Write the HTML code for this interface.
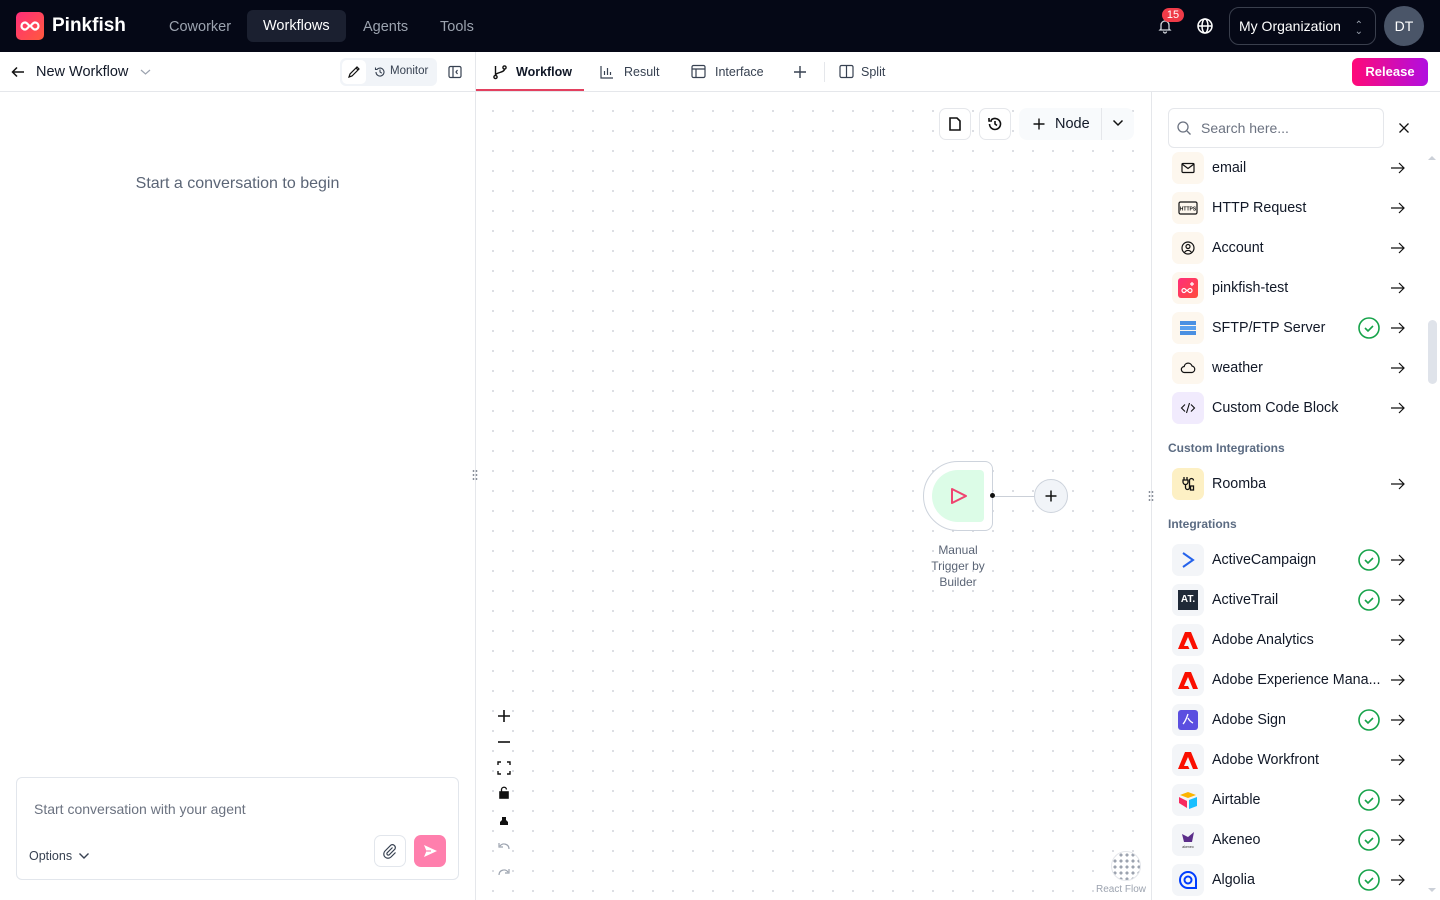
<!DOCTYPE html>
<html><head><meta charset="utf-8">
<style>
*{box-sizing:border-box;margin:0;padding:0}
body{width:1440px;height:900px;overflow:hidden;font-family:"Liberation Sans",sans-serif;background:#fff;color:#111827;position:relative}
.top{position:absolute;left:0;top:0;width:1440px;height:52px;background:#050816}
.abs{position:absolute}
.nav{position:absolute;top:10px;height:32px;line-height:32px;font-size:14.5px;color:#9ca3af;padding:0 16px;border-radius:6px}
.row{position:absolute;left:1168px;width:240px;height:40px;display:flex;align-items:center}
.ic{width:32px;height:32px;border-radius:7px;background:#fdf7ee;display:flex;align-items:center;justify-content:center;margin-left:4px}
.ic.g{background:#f3f5f8}
.row .t{margin-left:8px;font-size:14.3px;color:#111827;flex:1;white-space:nowrap}
.hdr{position:absolute;left:1168px;font-size:12px;color:#5b6b82;font-weight:bold}
</style></head><body>
<div class="top">
  <div class="abs" style="left:16px;top:12px;width:28px;height:28px;border-radius:5px;background:linear-gradient(135deg,#ff2d7a,#ff5a3c)">
    <svg width="28" height="28" viewBox="0 0 28 28"><path d="M9 10.5a3.5 3.5 0 1 0 0 7c2.5 0 3.5-3.5 5-3.5s2.5 3.5 5 3.5a3.5 3.5 0 1 0 0-7c-2.5 0-3.5 3.5-5 3.5s-2.5-3.5-5-3.5z" fill="none" stroke="#fff" stroke-width="2.2"/></svg>
  </div>
  <div class="abs" style="left:52px;top:15px;font-size:19px;font-weight:bold;color:#fff">Pinkfish</div>
  <div class="nav" style="left:153px;top:11px">Coworker</div>
  <div class="nav" style="left:247px;background:#1b2030;color:#fff;top:10px;line-height:33px">Workflows</div>
  <div class="nav" style="left:347px;top:11px">Agents</div>
  <div class="nav" style="left:424px;top:11px">Tools</div>
  <svg class="abs" style="left:1157px;top:18px" width="16" height="16" viewBox="0 0 16 16"><path d="M4 11V7a4 4 0 0 1 8 0v4l1 1H3zM6.5 13.5a1.5 1.5 0 0 0 3 0" fill="none" stroke="#d1d5db" stroke-width="1.3"/></svg>
  <div class="abs" style="left:1162px;top:8px;width:22px;height:14px;border-radius:7px;background:#ef3b48;color:#fff;font-size:11px;line-height:14px;text-align:center">15</div>
  <svg class="abs" style="left:1196px;top:17px" width="18" height="18" viewBox="0 0 18 18" fill="none" stroke="#fff" stroke-width="1.5"><circle cx="9" cy="9" r="7"/><ellipse cx="9" cy="9" rx="3" ry="7"/><path d="M2 9h14"/></svg>
  <div class="abs" style="left:1229px;top:7px;width:147px;height:38px;border:1px solid #3a3f4d;border-radius:10px;color:#fff;font-size:14px;line-height:36px;padding-left:9px">My Organization<span style="position:absolute;right:12px;top:0;color:#9ca3af;font-size:10px">⌃</span><span style="position:absolute;right:12px;top:6px;color:#9ca3af;font-size:10px">⌄</span></div>
  <div class="abs" style="left:1384px;top:6px;width:40px;height:40px;border-radius:50%;background:#4a5568;color:#fff;font-size:14px;line-height:40px;text-align:center">DT</div>
</div>
<div class="abs" style="left:0;top:52px;width:1440px;height:40px;border-bottom:1px solid #e5e7eb"></div>
<svg class="abs" style="left:10px;top:64px" width="16" height="16" viewBox="0 0 16 16" fill="none" stroke="#111" stroke-width="1.5"><path d="M14 8H3M7 3.5L2.5 8 7 12.5"/></svg>
<div class="abs" style="left:36px;top:64px;font-size:14.5px">New Workflow</div>
<svg class="abs" style="left:140px;top:68px" width="11" height="8" viewBox="0 0 11 8" fill="none" stroke="#9ca3af" stroke-width="1.2"><path d="M1 2l4.5 4L10 2"/></svg>
<div class="abs" style="left:340px;top:58px;width:97px;height:28px;border-radius:6px;background:#f1f4f8"></div>
<div class="abs" style="left:342px;top:60px;width:24px;height:24px;border-radius:5px;background:#fff"></div>
<svg class="abs" style="left:347px;top:65px" width="14" height="14" viewBox="0 0 14 14" fill="none" stroke="#111" stroke-width="1.2"><path d="M2 12l1-3 7-7 2 2-7 7zM9 3l2 2"/></svg>
<svg class="abs" style="left:374px;top:66px" width="12" height="12" viewBox="0 0 12 12" fill="none" stroke="#374151" stroke-width="1.1"><path d="M2 6a4 4 0 1 0 1.2-2.8M1.5 1.5v2h2M6 3.5V6l1.8 1.2"/></svg>
<div class="abs" style="left:390px;top:65px;font-size:11.5px;color:#374151">Monitor</div>
<svg class="abs" style="left:448px;top:65px" width="14" height="14" viewBox="0 0 14 14" fill="none" stroke="#374151" stroke-width="1.2"><rect x="1" y="1.5" width="12" height="11" rx="1.5"/><path d="M5 1.5v11M9.5 5L8 7l1.5 2"/></svg>
<div class="abs" style="left:475px;top:52px;width:1px;height:848px;background:#e5e7eb"></div>
<svg class="abs" style="left:492px;top:64px" width="16" height="16" viewBox="0 0 16 16" fill="none" stroke="#111" stroke-width="1.4"><circle cx="3.5" cy="13" r="1.6"/><circle cx="12.5" cy="3.5" r="1.6"/><path d="M3.5 2v9.4M12.5 5c0 4-9 3-9 6.5"/></svg>
<div class="abs" style="left:516px;top:65px;font-size:12.5px;font-weight:bold">Workflow</div>
<div class="abs" style="left:476px;top:89px;width:108px;height:2px;background:#e3405f"></div>
<svg class="abs" style="left:600px;top:65px" width="14" height="14" viewBox="0 0 14 14" fill="none" stroke="#374151" stroke-width="1.2"><path d="M1 1v12h12M4.5 10V6M7.5 10V3M10.5 10V7"/></svg>
<div class="abs" style="left:624px;top:65px;font-size:12.5px;color:#374151">Result</div>
<svg class="abs" style="left:691px;top:64px" width="15" height="15" viewBox="0 0 15 15" fill="none" stroke="#374151" stroke-width="1.2"><rect x="1" y="1.5" width="13" height="12" rx="1.5"/><path d="M1 5h13M5 5v8.5"/></svg>
<div class="abs" style="left:715px;top:65px;font-size:12.5px;color:#374151">Interface</div>
<svg class="abs" style="left:793px;top:65px" width="14" height="14" viewBox="0 0 14 14" stroke="#374151" stroke-width="1.4"><path d="M7 1v12M1 7h12"/></svg>
<div class="abs" style="left:824px;top:62px;width:1px;height:20px;background:#e5e7eb"></div>
<svg class="abs" style="left:839px;top:64px" width="15" height="15" viewBox="0 0 15 15" fill="none" stroke="#374151" stroke-width="1.2"><rect x="1" y="1.5" width="13" height="12" rx="1.5"/><path d="M7.5 1.5v12"/></svg>
<div class="abs" style="left:861px;top:65px;font-size:12.5px;color:#374151">Split</div>
<div class="abs" style="left:1352px;top:58px;width:76px;height:28px;border-radius:6px;background:linear-gradient(90deg,#ff0a78,#b10ee0);color:#fff;font-size:13px;font-weight:bold;line-height:28px;text-align:center">Release</div>
<div class="abs" style="left:0;top:175px;width:475px;text-align:center;font-size:16px;color:#5b6576">Start a conversation to begin</div>
<div class="abs" style="left:16px;top:777px;width:443px;height:103px;border:1px solid #e2e6ec;border-radius:6px;background:#fff"></div>
<div class="abs" style="left:34px;top:801px;font-size:14px;color:#6b7280">Start conversation with your agent</div>
<div class="abs" style="left:29px;top:849px;font-size:12.5px;color:#374151">Options</div>
<svg class="abs" style="left:78px;top:852px" width="12" height="8" viewBox="0 0 12 8" fill="none" stroke="#374151" stroke-width="1.4"><path d="M1.5 1.5L6 6l4.5-4.5"/></svg>
<div class="abs" style="left:374px;top:835px;width:32px;height:32px;border:1px solid #e2e6ec;border-radius:7px"></div>
<svg class="abs" style="left:382px;top:843px" width="16" height="16" viewBox="0 0 16 16" fill="none" stroke="#374151" stroke-width="1.2"><path d="M10.5 4.5L5 10a1.5 1.5 0 0 0 2 2l6-6a3 3 0 0 0-4-4L3 8a4.2 4.2 0 0 0 6 6l4.5-4.5"/></svg>
<div class="abs" style="left:414px;top:835px;width:32px;height:32px;border-radius:7px;background:#ff7fad"></div>
<svg class="abs" style="left:422px;top:843px" width="16" height="16" viewBox="0 0 16 16"><path d="M2 2l13 6-13 6 2.5-6z" fill="#fff"/><path d="M4.5 8H9" stroke="#ff7fad" stroke-width="1.2"/></svg>
<svg class="abs" style="left:472px;top:469px" width="6" height="14"><circle cx="1.5" cy="2" r="0.9" fill="#6b7280"/><circle cx="4.5" cy="2" r="0.9" fill="#6b7280"/><circle cx="1.5" cy="6" r="0.9" fill="#6b7280"/><circle cx="4.5" cy="6" r="0.9" fill="#6b7280"/><circle cx="1.5" cy="10" r="0.9" fill="#6b7280"/><circle cx="4.5" cy="10" r="0.9" fill="#6b7280"/></svg>
<div class="abs" style="left:476px;top:92px;width:675px;height:808px;background-image:radial-gradient(circle,#c4c8d0 0.7px,transparent 1px);background-size:20px 20px;background-position:-13px -11px"></div>
<div class="abs" style="left:939px;top:108px;width:32px;height:32px;border:1px solid #e5e7eb;border-radius:7px;background:#fff"></div>
<svg class="abs" style="left:947px;top:116px" width="16" height="16" viewBox="0 0 16 16" fill="none" stroke="#111" stroke-width="1.6"><path d="M3 2h7l3 3v9H3z"/></svg>
<div class="abs" style="left:979px;top:108px;width:32px;height:32px;border:1px solid #e5e7eb;border-radius:7px;background:#fff"></div>
<svg class="abs" style="left:987px;top:116px" width="16" height="16" viewBox="0 0 16 16" fill="none" stroke="#111" stroke-width="1.6"><path d="M2.5 8a5.5 5.5 0 1 0 1.6-3.9M2 2v3h3M8 5v3l2 1.5"/></svg>
<div class="abs" style="left:1019px;top:108px;width:115px;height:32px;border-radius:8px;background:#f8fafc"></div>
<svg class="abs" style="left:1032px;top:117px" width="14" height="14" viewBox="0 0 14 14" stroke="#111" stroke-width="1.4"><path d="M7 1.5v11M1.5 7h11"/></svg>
<div class="abs" style="left:1055px;top:116px;font-size:14.5px">Node</div>
<div class="abs" style="left:1101px;top:108px;width:1px;height:32px;background:#e5e7eb"></div>
<svg class="abs" style="left:1112px;top:119px" width="12" height="8" viewBox="0 0 12 8" fill="none" stroke="#111" stroke-width="1.5"><path d="M1.5 1.5L6 6l4.5-4.5"/></svg>
<div class="abs" style="left:923px;top:461px;width:70px;height:70px;border:1px solid #cdd3dc;border-radius:35px 8px 8px 35px;background:#fff"></div>
<div class="abs" style="left:932px;top:470px;width:52px;height:52px;border-radius:26px 4px 4px 26px;background:#dcfce7"></div>
<svg class="abs" style="left:949px;top:486px" width="20" height="20" viewBox="0 0 20 20" fill="none" stroke="#ef4470" stroke-width="2" stroke-linejoin="round"><path d="M3 3l14 7-14 7z"/></svg>
<div class="abs" style="left:990px;top:493px;width:5px;height:5px;border-radius:50%;background:#111"></div>
<div class="abs" style="left:995px;top:495.5px;width:40px;height:1px;background:#cbd0d8"></div>
<div class="abs" style="left:1034px;top:479px;width:34px;height:34px;border-radius:50%;border:1px solid #cdd3dc;background:#f1f4f8"></div>
<svg class="abs" style="left:1044px;top:489px" width="14" height="14" viewBox="0 0 14 14" stroke="#111" stroke-width="1.5"><path d="M7 1.5v11M1.5 7h11"/></svg>
<div class="abs" style="left:918px;top:542px;width:80px;text-align:center;font-size:12px;line-height:16px;color:#5b6576">Manual Trigger by Builder</div>
<svg class="abs" style="left:496px;top:708px" width="16" height="180" viewBox="0 0 16 180" fill="none" stroke="#111" stroke-width="1.6">
<path d="M8 2v12M2 8h12"/><path d="M2 34h12"/><path d="M2 57v-3h3M11 54h3v3M14 63v3h-3M5 66H2v-3" stroke-width="1.4"/>
<rect x="4" y="84" width="8" height="6" fill="#111"/><path d="M5.5 84v-2a2.5 2.5 0 0 1 5 -0.5" stroke-width="1.3"/>
<path d="M4 117v-3l2-2v-3h4v3l2 2v3z" fill="#111" stroke="none"/>
<path d="M4 138a5 5 0 0 1 9 3M3 135v4h4" stroke="#9ca3af" stroke-width="1.2"/>
<path d="M12 164a5 5 0 0 0-9 3M13 161v4H9" stroke="#9ca3af" stroke-width="1.2"/>
</svg>
<div class="abs" style="left:1111px;top:851px;width:30px;height:30px;border-radius:50%;border:1px solid #e5e7eb;background:#fff;background-image:radial-gradient(circle,#9ca3af 1.4px,transparent 1.8px);background-size:6px 6px;background-position:0 0"></div>
<div class="abs" style="left:1096px;top:884px;font-size:10px;color:#9ca3af;background:#fff">React Flow</div>
<div class="abs" style="left:1151px;top:92px;width:289px;height:808px;background:#fff;border-left:1px solid #e5e7eb"></div>
<svg class="abs" style="left:1148px;top:490px" width="6" height="14"><circle cx="1.5" cy="2" r="0.9" fill="#6b7280"/><circle cx="4.5" cy="2" r="0.9" fill="#6b7280"/><circle cx="1.5" cy="6" r="0.9" fill="#6b7280"/><circle cx="4.5" cy="6" r="0.9" fill="#6b7280"/><circle cx="1.5" cy="10" r="0.9" fill="#6b7280"/><circle cx="4.5" cy="10" r="0.9" fill="#6b7280"/></svg>
<div class="abs" style="left:1168px;top:108px;width:216px;height:40px;border:1px solid #e5e7eb;border-radius:6px"></div>
<svg class="abs" style="left:1176px;top:120px" width="16" height="16" viewBox="0 0 16 16" fill="none" stroke="#6b7280" stroke-width="1.3"><circle cx="7" cy="7" r="5"/><path d="M11 11l3.5 3.5"/></svg>
<div class="abs" style="left:1201px;top:120px;font-size:14px;color:#6b7280">Search here...</div>
<svg class="abs" style="left:1398px;top:122px" width="12" height="12" viewBox="0 0 12 12" stroke="#111" stroke-width="1.3"><path d="M1.5 1.5l9 9M10.5 1.5l-9 9"/></svg>
<div class="abs" style="left:1428px;top:320px;width:9px;height:64px;border-radius:5px;background:#dfe3ea"></div>
<div class="abs" style="left:1428px;top:152px;width:0;height:0;border:4px solid transparent;border-bottom-color:#cbd0d8"></div>
<div class="abs" style="left:1428px;top:888px;width:0;height:0;border:4px solid transparent;border-top-color:#cbd0d8"></div>

<div class="row" style="top:148px"><div class="ic"><svg width="16" height="16" viewBox="0 0 16 16" fill="none" stroke="#111" stroke-width="1.2"><rect x="2" y="3.5" width="12" height="9" rx="1"/><path d="M2 4l6 4.5L14 4"/></svg></div><span class="t">email</span></div>
<div class="row" style="top:188px"><div class="ic"><svg width="20" height="16" viewBox="0 0 20 16" fill="none" stroke="#111" stroke-width="1.2"><rect x="1" y="2" width="18" height="12" rx="1.5"/><text x="10" y="10.5" font-size="5" text-anchor="middle" fill="#111" stroke="none" font-family="Liberation Sans" font-weight="bold">HTTPS</text></svg></div><span class="t">HTTP Request</span></div>
<div class="row" style="top:228px"><div class="ic"><svg width="16" height="16" viewBox="0 0 16 16" fill="none" stroke="#111" stroke-width="1.2"><circle cx="8" cy="8" r="6"/><circle cx="8" cy="6.5" r="2"/><path d="M4.5 12.5a4 4 0 0 1 7 0"/></svg></div><span class="t">Account</span></div>
<div class="row" style="top:268px"><div class="ic"><svg width="20" height="20" viewBox="0 0 20 20"><defs><linearGradient id="pg" x1="0" y1="0" x2="1" y2="1"><stop offset="0" stop-color="#ff2d7a"/><stop offset="1" stop-color="#ff4d3c"/></linearGradient></defs><rect width="20" height="20" rx="3" fill="url(#pg)"/><path d="M6 10.5a2 2 0 1 0 0 4c1.5 0 2-2 3-2s1.5 2 3 2a2 2 0 1 0 0-4c-1.5 0-2 2-3 2s-1.5-2-3-2zM14 4v4M12 6h4" fill="none" stroke="#fff" stroke-width="1.2"/></svg></div><span class="t">pinkfish-test</span></div>
<div class="row" style="top:308px"><div class="ic"><svg width="18" height="16" viewBox="0 0 18 16"><rect x="1" y="1" width="16" height="4" fill="#4a90e2"/><rect x="1" y="6" width="16" height="4" fill="#5aa0ee"/><rect x="1" y="11" width="16" height="4" fill="#4a90e2"/></svg></div><span class="t">SFTP/FTP Server</span></div>
<div class="row" style="top:348px"><div class="ic"><svg width="16" height="16" viewBox="0 0 16 16" fill="none" stroke="#111" stroke-width="1.2"><path d="M4.5 12.5a3 3 0 0 1-.3-6A4 4 0 0 1 12 6a3.3 3.3 0 0 1 0 6.5z"/></svg></div><span class="t">weather</span></div>
<div class="row" style="top:388px"><div class="ic" style="background:#f1ebfd"><svg width="16" height="16" viewBox="0 0 16 16" fill="none" stroke="#111" stroke-width="1.1"><path d="M5 4.5L1.5 8 5 11.5M11 4.5L14.5 8 11 11.5M9.5 3l-3 10"/></svg></div><span class="t">Custom Code Block</span></div>
<div class="hdr" style="top:441px">Custom Integrations</div>
<div class="row" style="top:464px"><div class="ic" style="background:#fdf0c4"><svg width="16" height="16" viewBox="0 0 16 16" fill="none" stroke="#111" stroke-width="1.3"><path d="M4 1v3M7 1v3M3 4h5v2a2.5 2.5 0 0 1-5 0zM5.5 8.5v3a2 2 0 0 0 4 0v-7a2 2 0 0 1 4 0"/><rect x="10.5" y="10" width="3" height="4"/></svg></div><span class="t">Roomba</span></div>
<div class="hdr" style="top:517px">Integrations</div>
<div class="row" style="top:540px"><div class="ic g"><svg width="16" height="18" viewBox="0 0 16 18" fill="none" stroke="#2563eb" stroke-width="2"><path d="M3 2l10 7-10 7"/></svg></div><span class="t">ActiveCampaign</span></div>
<div class="row" style="top:580px"><div class="ic g"><div style="width:20px;height:20px;background:#1f2937;color:#fff;font-size:10px;font-weight:bold;line-height:20px;text-align:center">AT.</div></div><span class="t">ActiveTrail</span></div>
<div class="row" style="top:620px"><div class="ic g"><svg width="20" height="18" viewBox="0 0 20 18"><path d="M7 1h6l7 17h-5L10 6 6 15h4l1.5 3H0z" fill="#fa0f00"/></svg></div><span class="t">Adobe Analytics</span></div>
<div class="row" style="top:660px"><div class="ic g"><svg width="20" height="18" viewBox="0 0 20 18"><path d="M7 1h6l7 17h-5L10 6 6 15h4l1.5 3H0z" fill="#fa0f00"/></svg></div><span class="t">Adobe Experience Mana...</span></div>
<div class="row" style="top:700px"><div class="ic g"><svg width="20" height="20" viewBox="0 0 20 20"><rect width="20" height="20" rx="3" fill="#5b4fe0"/><path d="M10 4c-1 3-3 8-5 10M10 8c1 2 3 4 5 5" fill="none" stroke="#fff" stroke-width="1.3"/></svg></div><span class="t">Adobe Sign</span></div>
<div class="row" style="top:740px"><div class="ic g"><svg width="20" height="18" viewBox="0 0 20 18"><path d="M7 1h6l7 17h-5L10 6 6 15h4l1.5 3H0z" fill="#fa0f00"/></svg></div><span class="t">Adobe Workfront</span></div>
<div class="row" style="top:780px"><div class="ic g"><svg width="20" height="18" viewBox="0 0 20 18"><path d="M10 1l8 3-8 3-8-3z" fill="#fcb400"/><path d="M11 9l8-3v9l-8 3z" fill="#18bfff"/><path d="M1 6l8 4v7L1 12z" fill="#f82b60"/></svg></div><span class="t">Airtable</span></div>
<div class="row" style="top:820px"><div class="ic g"><svg width="20" height="20" viewBox="0 0 20 20"><path d="M4 4l6 3 6-5-2 10H6z" fill="#5b2d8a"/><text x="10" y="18" font-size="3.5" text-anchor="middle" fill="#333" font-family="Liberation Sans">akeneo</text></svg></div><span class="t">Akeneo</span></div>
<div class="row" style="top:860px"><div class="ic g"><svg width="20" height="20" viewBox="0 0 20 20" fill="none" stroke="#003dff" stroke-width="2"><path d="M10 2a8 8 0 1 0 0 16h8V10A8 8 0 0 0 10 2z"/><circle cx="10" cy="10" r="3.5"/></svg></div><span class="t">Algolia</span></div>

<svg class="abs" style="left:0;top:0" width="1440" height="900">
<defs>
<g id="ck"><circle cx="11" cy="11" r="10" fill="none" stroke="#16a34a" stroke-width="1.6"/><path d="M7 11l3 3 5-5" fill="none" stroke="#16a34a" stroke-width="1.6"/></g>
<g id="ar"><path d="M1 7h13M9 2l5 5-5 5" fill="none" stroke="#111" stroke-width="1.2"/></g>
</defs>
<use href="#ck" x="1358" y="317"/><use href="#ck" x="1358" y="549"/><use href="#ck" x="1358" y="589"/><use href="#ck" x="1358" y="709"/><use href="#ck" x="1358" y="789"/><use href="#ck" x="1358" y="829"/><use href="#ck" x="1358" y="869"/>
<use href="#ar" x="1390" y="161"/><use href="#ar" x="1390" y="201"/><use href="#ar" x="1390" y="241"/><use href="#ar" x="1390" y="281"/><use href="#ar" x="1390" y="321"/><use href="#ar" x="1390" y="361"/><use href="#ar" x="1390" y="401"/><use href="#ar" x="1390" y="477"/>
<use href="#ar" x="1390" y="553"/><use href="#ar" x="1390" y="593"/><use href="#ar" x="1390" y="633"/><use href="#ar" x="1390" y="673"/><use href="#ar" x="1390" y="713"/><use href="#ar" x="1390" y="753"/><use href="#ar" x="1390" y="793"/><use href="#ar" x="1390" y="833"/><use href="#ar" x="1390" y="873"/>
</svg>
</body></html>
